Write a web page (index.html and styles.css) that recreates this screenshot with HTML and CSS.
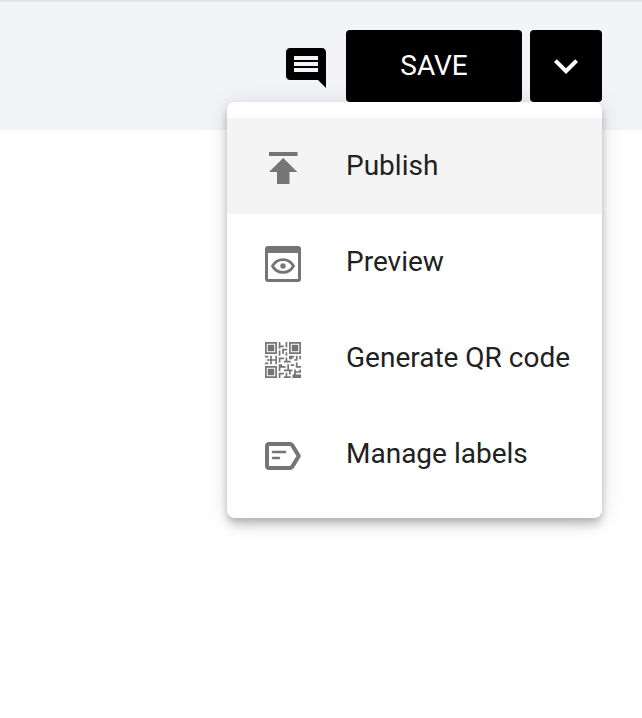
FILE: index.html
```html
<!DOCTYPE html>
<html lang="en">
<head>
<meta charset="utf-8">
<title>Publish menu</title>
<link rel="stylesheet" href="styles.css">
</head>
<body>
<header class="toolbar">
  <svg class="icon comment" viewBox="0 0 24 24"><path d="M21.99 4c0-1.1-.89-2-1.99-2H4c-1.1 0-2 .9-2 2v12c0 1.1.9 2 2 2h14l4 4-.01-18zM18 14H6v-2h12v2zm0-3H6V9h12v2zm0-3H6V6h12v2z"/></svg>
  <button class="button save">SAVE</button>
  <div class="split">
    <button class="button toggle" aria-label="More"><svg width="48" height="48" viewBox="0 0 24 24"><path d="M7.41 8.59 12 13.17l4.59-4.58L18 10l-6 6-6-6z"/></svg></button>
    <ul class="menu">
      <li class="item active"><svg class="icon" viewBox="0 0 48 48"><path d="M10 8h28.5v4H10zM10 28 24.2 14 38.3 28H30.5v12H18V28z"/></svg><span>Publish</span></li>
      <li class="item"><svg class="icon" viewBox="0 0 48 48"><path fill-rule="evenodd" d="M9 6h30a3 3 0 0 1 3 3v30a3 3 0 0 1-3 3H9a3 3 0 0 1-3-3V9a3 3 0 0 1 3-3zm0 7v26h30V13z"/><path class="line" d="M13.5 26Q17 19.6 24 19.6T34.5 26Q31 32.4 24 32.4T13.5 26z"/><circle cx="24" cy="26" r="2.7"/></svg><span>Preview</span></li>
      <li class="item"><svg class="icon" viewBox="0 0 48 48"><g transform="translate(6 6) scale(1.7143)"><path class="qr" d="M.5.5h6v6h-6zM14.5.5h6v6h-6zM.5 14.5h6v6h-6z"/><path d="M1.6 1.6h3.8v3.8H1.6zM15.6 1.6h3.8v3.8h-3.8zM1.6 15.6h3.8v3.8H1.6zM8 0h1v2h2v1H9v1H8zM12 0h1v3h-1zM10 4h3v1h-2v2h-1zM8 5h1v3H8zM12 6h1v2h-1zM0 8h2v1H0zM3 8h1v2h2V8h1v5H6v-2H4v2H3v-2H1v-1h2zM0 12h2v1H0zM8 9h3v1H9v2H8zM12 9h1v2h2v1h-4v-1h1zM14 8h3v1h-1v1h-2zM18 8h1v3h-2v-1h1zM20 8h1v2h-1zM8 13h2v1h2v1H9v2H8zM13 13h1v3h2v1h-4v-1h1zM15 13h2v1h-2zM18 12h1v2h2v1h-3zM11 16h1v1h-1zM8 18h3v1H9v2H8zM12 18h1v2h2v1h-4v-1h1zM14 17h1v2h-1zM17 16h1v1h2v1h-3zM16 19h1v-1h1v1h3v2h-5zM20 16h1v2h-1z"/></g></svg><span>Generate QR code</span></li>
      <li class="item"><svg class="icon" viewBox="0 0 48 48"><path class="tag" d="M10 12h21.2q1.1 0 1.8.9L39.8 24 33 35.1q-.7.9-1.8.9H10q-2 0-2-2V14q0-2 2-2z"/><path class="text" d="M14 20h12M14 26h6"/></svg><span>Manage labels</span></li>
    </ul>
  </div>
</header>
</body>
</html>
```
FILE: styles.css
```css
* { box-sizing: border-box; }
body { margin: 0; min-height: 718px; background: #fff; font-family: Roboto, sans-serif; }
.toolbar {
  display: flex;
  align-items: flex-start;
  justify-content: flex-end;
  height: 130px;
  padding: 28px 40px 0 0;
  border-top: 2px solid #e4e2e4;
  background: #f3f4f8;
}
.icon { display: block; flex: none; width: 48px; height: 48px; fill: #757575; }
.comment { margin: 14px 16px 0 0; fill: #000; }
.button {
  height: 72px;
  padding: 0;
  border: 0;
  border-radius: 4px;
  background: #000;
  color: #fff;
  font: 400 28px/72px Roboto, sans-serif;
}
.save { width: 176px; margin-right: 8px; }
.split { position: relative; }
.toggle { display: flex; align-items: center; justify-content: center; width: 72px; fill: #fff; }
.menu {
  position: absolute;
  top: 72px;
  right: 0;
  width: 375px;
  height: 416px;
  margin: 0;
  padding: 16px 0;
  list-style: none;
  border-radius: 8px;
  background: #fff;
  box-shadow: 0 4px 8px -2px rgba(0,0,0,.2), 0 8px 10px rgba(0,0,0,.12), 0 2px 24px rgba(0,0,0,.12);
}
.item {
  display: flex;
  align-items: center;
  gap: 39px;
  height: 96px;
  padding: 0 32px;
  color: #212121;
  font-size: 28px;
  line-height: 96px;
  white-space: nowrap;
}
.item .icon { position: relative; top: 2px; }
.active { background: #f4f4f4; }
.line { fill: none; stroke: #757575; stroke-width: 2.8; }
.qr { fill: none; stroke: #757575; }
.tag { fill: none; stroke: #757575; stroke-width: 4; stroke-linejoin: round; }
.text { fill: none; stroke: #757575; stroke-width: 2.6; stroke-linecap: round; }
```
